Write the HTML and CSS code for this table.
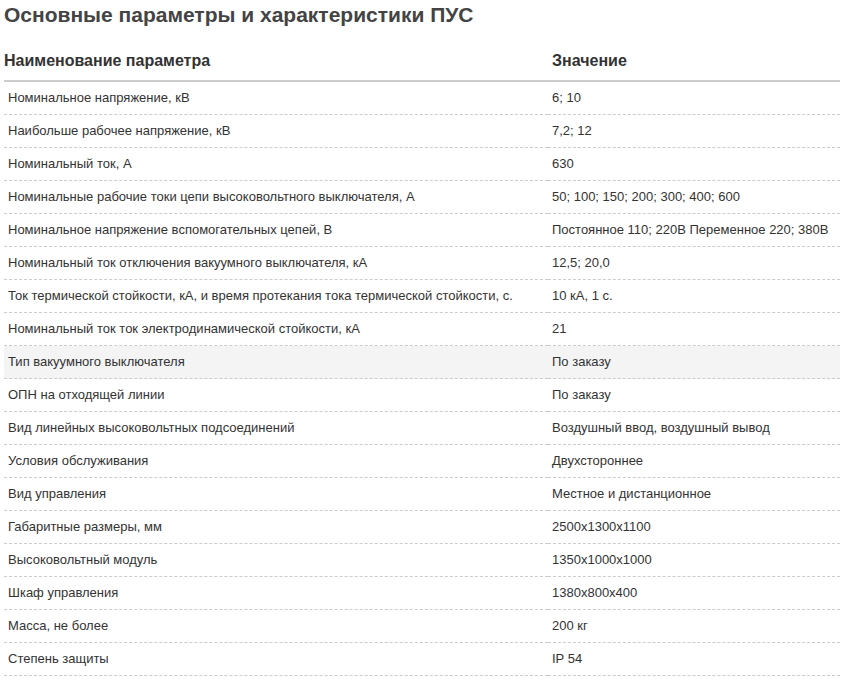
FILE: index.html
```html
<!DOCTYPE html>
<html lang="ru">
<head>
<meta charset="utf-8">
<link rel="stylesheet" href="styles.css">
</head>
<body>
<div class="page">
  <h2 class="title">Основные параметры и характеристики ПУС</h2>
  <table class="specs">
    <thead>
      <tr><th class="c-name">Наименование параметра</th><th class="c-val">Значение</th></tr>
    </thead>
    <tbody>
      <tr><td>Номинальное напряжение, кВ</td><td>6; 10</td></tr>
      <tr><td>Наибольше рабочее напряжение, кВ</td><td>7,2; 12</td></tr>
      <tr><td>Номинальный ток, А</td><td>630</td></tr>
      <tr><td>Номинальные рабочие токи цепи высоковольтного выключателя, А</td><td>50; 100; 150; 200; 300; 400; 600</td></tr>
      <tr><td>Номинальное напряжение вспомогательных цепей, В</td><td>Постоянное 110; 220В Переменное 220; 380В</td></tr>
      <tr><td>Номинальный ток отключения вакуумного выключателя, кА</td><td>12,5; 20,0</td></tr>
      <tr><td>Ток термической стойкости, кА, и время протекания тока термической стойкости, с.</td><td>10 кА, 1 с.</td></tr>
      <tr><td>Номинальный ток ток электродинамической стойкости, кА</td><td>21</td></tr>
      <tr class="hl"><td>Тип вакуумного выключателя</td><td>По заказу</td></tr>
      <tr><td>ОПН на отходящей линии</td><td>По заказу</td></tr>
      <tr><td>Вид линейных высоковольтных подсоединений</td><td>Воздушный ввод, воздушный вывод</td></tr>
      <tr><td>Условия обслуживания</td><td>Двухстороннее</td></tr>
      <tr><td>Вид управления</td><td>Местное и дистанционное</td></tr>
      <tr><td>Габаритные размеры, мм</td><td>2500х1300х1100</td></tr>
      <tr><td>Высоковольтный модуль</td><td>1350х1000х1000</td></tr>
      <tr><td>Шкаф управления</td><td>1380х800х400</td></tr>
      <tr><td>Масса, не более</td><td>200 кг</td></tr>
      <tr><td>Степень защиты</td><td>IP 54</td></tr>
    </tbody>
  </table>
</div>
</body>
</html>
```

FILE: styles.css
```css
html, body {
  margin: 0;
  padding: 0;
  background: #fff;
}
body {
  font-family: "Liberation Sans", Arial, sans-serif;
  color: #333;
}
.page {
  padding: 0 7px 0 4px;
}
.title {
  margin: 0;
  padding-top: 3px;
  font-size: 21px;
  line-height: 24px;
  font-weight: bold;
  color: #444;
}
.specs {
  width: 836px;
  margin-top: 24px;
  border-collapse: collapse;
  font-size: 13px;
}
.specs th {
  text-align: left;
  font-size: 16px;
  font-weight: bold;
  color: #333;
  padding: 0 0 9px 0;
  line-height: 20px;
  border-bottom: 2px solid #ccc;
}
.specs th.c-val {
  padding-left: 4px;
}
.specs td {
  padding: 0 4px;
  height: 32px;
  line-height: 16px;
  border-bottom: 1px dashed #ccc;
  color: #333;
}
.specs td:first-child {
  width: 536px;
}
.specs tr.hl td {
  background: #f4f4f4;
}
```
